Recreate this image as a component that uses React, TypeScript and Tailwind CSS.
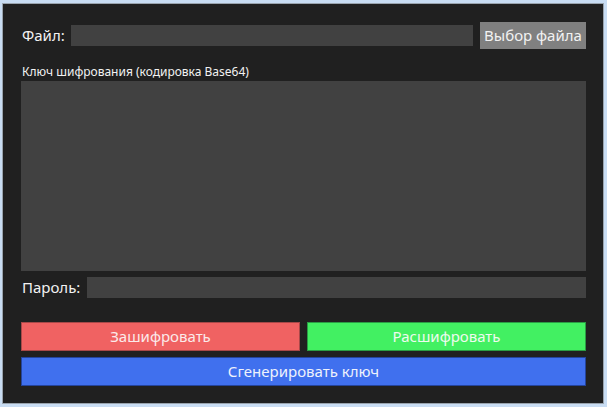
export default function App() {
  return (
    <div className="w-[607px] h-[407px] bg-[#c9ddf3] pt-[3px] pl-[2px] pr-[3px] pb-[3px] font-['Noto_Sans',sans-serif]">
      <div className="h-full border border-[#9aa4ae] bg-[#202020] flex flex-col pl-[18px] pr-[17px] pt-[18px] text-[#f2f2f2]">
        <div className="flex items-center h-[27px]">
          <span className="text-[15px] leading-none w-[50px] pl-[1px]">Файл:</span>
          <div className="flex-1 h-[21px] bg-[#414141]" />
          <button className="ml-[7px] w-[106px] h-[27px] bg-[#808080] text-[15px] leading-none text-[#f2f2f2]">
            Выбор файла
          </button>
        </div>
        <div className="mt-[15px] text-[12px] leading-[15px] pl-[1px]">Ключ шифрования (кодировка Base64)</div>
        <div className="mt-[2px] h-[190px] bg-[#414141]" />
        <div className="mt-[6px] flex items-center h-[21px]">
          <span className="text-[15px] leading-none w-[66px] pl-[1px]">Пароль:</span>
          <div className="flex-1 h-[21px] bg-[#414141]" />
        </div>
        <div className="mt-[24px] flex gap-[7px]">
          <button className="flex-1 h-[29px] bg-[#f06262] border border-[#a84848] text-[15px] leading-none text-[#fbeaea]">
            Зашифровать
          </button>
          <button className="flex-1 h-[29px] bg-[#42f062] border border-[#2a9c44] text-[15px] leading-none text-[#eefbee]">
            Расшифровать
          </button>
        </div>
        <button className="mt-[6px] h-[29px] bg-[#4070ee] border border-[#24449c] text-[15px] leading-none text-[#eef2fc]">
          Сгенерировать ключ
        </button>
      </div>
    </div>
  )
}
